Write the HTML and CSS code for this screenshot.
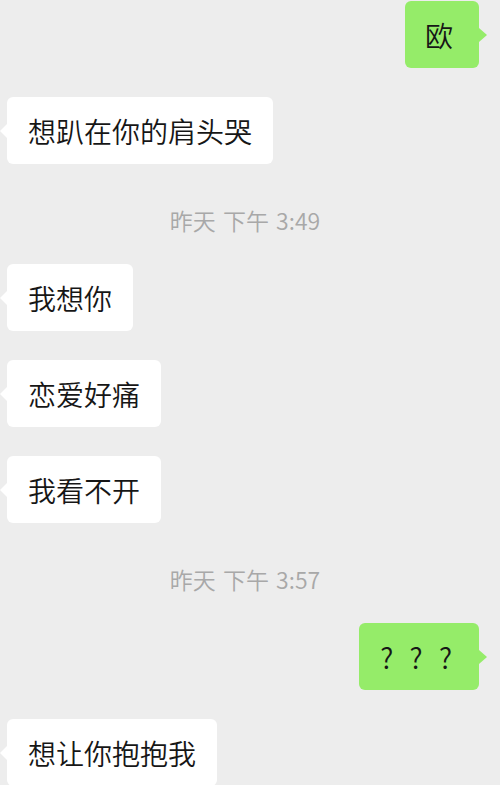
FILE: index.html
```html
<!DOCTYPE html>
<html lang="zh-CN">
<head>
    <meta charset="UTF-8">
    <meta name="viewport" content="width=device-width, initial-scale=1.0">
    <title>聊天记录</title>
    <link rel="stylesheet" href="styles.css">
</head>
<body>
    <div class="chat">
        <div class="row row-me">
            <div class="bubble bubble-me bubble-short">欧</div>
        </div>
        <div class="row">
            <div class="bubble">想趴在你的肩头哭</div>
        </div>
        <div class="time">昨天 下午 3:49</div>
        <div class="row">
            <div class="bubble">我想你</div>
        </div>
        <div class="row">
            <div class="bubble">恋爱好痛</div>
        </div>
        <div class="row">
            <div class="bubble">我看不开</div>
        </div>
        <div class="time">昨天 下午 3:57</div>
        <div class="row row-me">
            <div class="bubble bubble-me bubble-ask">? ? ?</div>
        </div>
        <div class="row">
            <div class="bubble">想让你抱抱我</div>
        </div>
    </div>
</body>
</html>
```

FILE: styles.css
```css
body {
    font-family: "Noto Sans CJK SC", "Noto Sans", sans-serif;
    background: #ededed;
    margin: 0;
    padding: 0;
    height: 785px;
    overflow: hidden;
}
.chat {
    display: flex;
    flex-direction: column;
    gap: 29px;
    padding-top: 1px;
}
.row {
    display: flex;
    padding-left: 7px;
}
.row-me {
    justify-content: flex-end;
    padding-left: 0;
    padding-right: 21px;
}
.bubble {
    position: relative;
    display: flex;
    align-items: center;
    height: 67px;
    padding: 0 21px;
    background-color: #fff;
    color: #161616;
    font-size: 28px;
    font-weight: 350;
    border-radius: 6px;
    box-sizing: border-box;
}
/* petite pointe du message */
.bubble::before {
    content: "";
    position: absolute;
    top: 50%;
    left: -7px;
    margin-top: -7px;
    border-top: 7px solid transparent;
    border-bottom: 7px solid transparent;
    border-right: 7px solid #fff;
}
.bubble-me {
    background-color: #95ec69;
}
.bubble-me::before {
    left: auto;
    right: -8px;
    border-right: none;
    border-left: 8px solid #95ec69;
}
.bubble-short {
    min-width: 74px;
    padding-left: 20px;
}
.bubble-ask {
    word-spacing: 10px;
    padding-right: 27px;
}
.time {
    text-align: center;
    color: #a8a8a8;
    font-size: 23px;
    font-weight: 350;
    line-height: 22px;
    word-spacing: 2px;
    margin: 16px 0 4px;
    padding-right: 10px;
}
```
